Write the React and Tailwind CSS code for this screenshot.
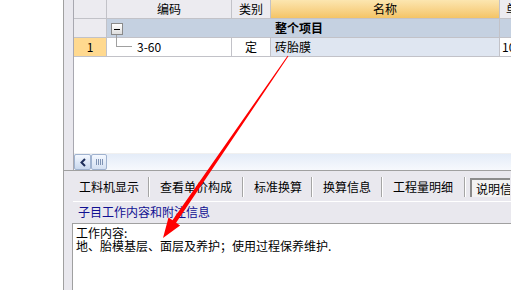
import React from 'react';

const font = 'font-["Noto_Sans_CJK_SC","Noto_Sans",sans-serif]';

const Arrow = () => (
  <svg className="absolute left-0 top-0 pointer-events-none" width="511" height="290">
    <polygon
      points="288.4,56.3 287.6,55.7 172.5,220.3 168.5,217.5 163,238 180.1,225.5 176.1,222.7"
      fill="#ff0000"
    />
  </svg>
);

const Tab = ({ label, w, pl = 'pl-[10px]' }) => (
  <div className={`flex items-center h-full ${w}`}>
    <span className={`flex-1 ${pl} whitespace-nowrap`}>{label}</span>
    <div className="flex h-[20px]">
      <div className="w-px bg-[#a5a5a5]" />
      <div className="w-px bg-white" />
    </div>
  </div>
);

export default function App() {
  return (
    <div className={`relative w-[511px] h-[290px] overflow-hidden bg-white flex text-[12px] text-black ${font}`}>
      <div className="w-[63px] shrink-0 bg-white" />
      <div className="flex-1 min-w-0 flex flex-col border-l border-[#a0a0a0] bg-[#e9e8ee] pl-[9px]">
        {/* Grid */}
        <div className="h-[170px] flex flex-col bg-white border-l border-[#a8a8b0]">
          <div className="flex-1 flex flex-col">
            {/* header */}
            <div className="flex h-[19px] border-b border-[#c2c2c8] leading-[18px]">
              <div className="w-[33px] bg-[#ecebf0] border-r border-[#c2c2c8]" />
              <div className="w-[125px] bg-[#ecebf0] border-r border-[#c2c2c8] text-center">编码</div>
              <div className="w-[39px] bg-[#ecebf0] border-r border-[#c2c2c8] text-center">类别</div>
              <div className="w-[229px] bg-gradient-to-b from-[#fce6b0] to-[#f4c466] border-r border-[#c2c2c8] text-center">名称</div>
              <div className="flex-1 min-w-0 overflow-hidden bg-[#ecebf0] pl-[6px] whitespace-nowrap">单</div>
            </div>
            {/* group row */}
            <div className="flex h-[19px] border-b border-[#c2c2c8] leading-[18px]">
              <div className="w-[33px] bg-[#ecebf0] border-r border-[#c2c2c8]" />
              <div className="w-[125px] bg-[#c5d1e1] border-r border-[#c5d1e1] relative">
                <div className="absolute left-[4px] top-[4px] w-[12px] h-[12px] border border-[#8a8a8a] bg-gradient-to-b from-white to-[#dedede] flex items-center justify-center">
                  <div className="w-[6px] h-px bg-black" />
                </div>
              </div>
              <div className="w-[39px] bg-[#c5d1e1] border-r border-[#c5d1e1]" />
              <div className="w-[229px] bg-[#c5d1e1] border-r border-[#c2c2c8] pl-[4px] font-bold">整个项目</div>
              <div className="flex-1 bg-[#c5d1e1]" />
            </div>
            {/* item row */}
            <div className="flex h-[19px] border-b border-[#c2c2c8] leading-[18px]">
              <div className="w-[33px] bg-[#ffd98f] border-r border-[#c2c2c8] text-center">1</div>
              <div className="w-[125px] bg-white border-r border-[#c2c2c8] relative">
                <div className="absolute left-[9px] top-[-3px] w-px h-[12px] bg-[#a0a0a0]" />
                <div className="absolute left-[9px] top-[8px] w-[16px] h-px bg-[#a0a0a0]" />
                <span className="absolute left-[30px] top-0">3-60</span>
              </div>
              <div className="w-[39px] bg-white border-r border-[#c2c2c8] text-center">定</div>
              <div className="w-[229px] bg-[#dfe6f1] border-r border-[#c2c2c8] pl-[4px]">砖胎膜</div>
              <div className="flex-1 min-w-0 overflow-hidden bg-white pl-[2px] whitespace-nowrap">10</div>
            </div>
            <div className="flex-1 bg-white" />
          </div>
          {/* scrollbar */}
          <div className="h-[17px] flex bg-gradient-to-b from-[#e4ecf8] to-[#f7f9fd] border-t border-[#f0f0f0]">
            <div className="w-[17px] h-[16px] border border-[#9fb2cf] rounded-[2px] bg-gradient-to-b from-[#f4f8ff] to-[#c9d8ee] flex items-center justify-center">
              <svg width="8" height="9" viewBox="0 0 8 9">
                <path d="M6 1 L2.5 4.5 L6 8" stroke="#1e2e5a" strokeWidth="2" fill="none" />
              </svg>
            </div>
            <div className="w-[16px] h-[16px] border border-[#9fb2cf] rounded-[2px] bg-gradient-to-b from-[#f4f8ff] to-[#d4e0f2] flex items-center justify-center gap-px">
              <div className="w-px h-[6px] bg-[#7f93b4]" />
              <div className="w-px h-[6px] bg-[#7f93b4]" />
              <div className="w-px h-[6px] bg-[#7f93b4]" />
              <div className="w-px h-[6px] bg-[#7f93b4]" />
            </div>
          </div>
        </div>
        <div className="h-px bg-[#a0a0a0] -ml-[9px]" />
        {/* tabs */}
        <div className="h-[30px] flex items-end pb-[1px] -ml-px">
          <div className="h-[26px] flex items-center">
            <Tab label="工料机显示" w="w-[78px]" pl="pl-[7px]" />
            <Tab label="查看单价构成" w="w-[94px]" />
            <Tab label="标准换算" w="w-[69px]" />
            <Tab label="换算信息" w="w-[70px]" />
            <Tab label="工程量明细" w="w-[83px]" />
            <div className="ml-[4px] h-[19px] w-[40px] overflow-hidden border-l-2 border-t-2 border-[#8c8c8c] bg-[#f3f3f3] pl-[4px] leading-[17px] whitespace-nowrap">
              说明信
            </div>
          </div>
        </div>
        <div className="h-px bg-white" />
        {/* label */}
        <div className="h-[21px] leading-[20px] pl-[5px] text-[#101092] bg-[#e9e8ee]">
          子目工作内容和附注信息
        </div>
        {/* content */}
        <div className="flex-1 bg-white border-t border-l border-[#a0a0a0] -ml-px pl-[3px] pt-[2px] leading-[13px]">
          <div>工作内容:</div>
          <div>地、胎模基层、面层及养护；使用过程保养维护.</div>
        </div>
      </div>
      <Arrow />
    </div>
  );
}
